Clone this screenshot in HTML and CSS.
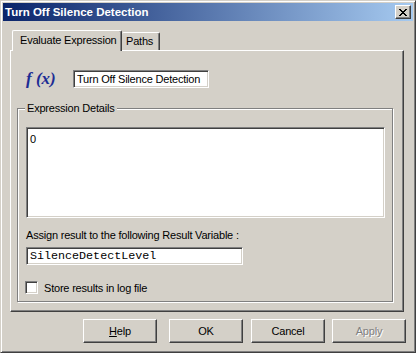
FILE: index.html
```html
<!DOCTYPE html>
<html>
<head>
<meta charset="utf-8">
<link rel="stylesheet" href="styles.css">
</head>
<body>
<div class="window">
  <div class="titlebar">
    <span class="title">Turn Off Silence Detection</span>
    <span class="close"><svg width="8" height="7" viewBox="0 0 8 7"><path d="M0 0h2v1h1v1h2V1h1V0h2v1H7v1H6v1H5v1h1v1h1v1h1v1H6V6H5V5H3v1H2v1H0V6h1V5h1V4h1V3H2V2H1V1H0z" fill="#000"/></svg></span>
  </div>
  <div class="content">
    <div class="tabs">
      <div class="tab active">Evaluate Expression</div>
      <div class="tab">Paths</div>
    </div>
    <div class="panel">
      <div class="fx-row">
        <span class="fx">f (x)</span>
        <div class="field name">Turn Off Silence Detection</div>
      </div>
      <div class="group">
        <span class="legend">Expression Details</span>
        <div class="textarea">0</div>
        <div class="label">Assign result to the following Result Variable :</div>
        <div class="field var">SilenceDetectLevel</div>
        <div class="check"><span class="box"></span><span>Store results in log file</span></div>
      </div>
    </div>
    <div class="buttons">
      <div class="btn help"><span class="u">H</span>elp</div>
      <div class="btn ok">OK</div>
      <div class="btn cancel">Cancel</div>
      <div class="btn apply disabled">Apply</div>
    </div>
  </div>
</div>
</body>
</html>
```
FILE: styles.css
```css
* { box-sizing: border-box; }
html, body { margin: 0; padding: 0; background: #d4d0c8; }
body {
  font-family: "Liberation Sans", Arial, sans-serif;
  font-size: 11px;
  letter-spacing: -0.2px;
  color: #000;
}
.window {
  width: 416px;
  height: 353px;
  border: 1px solid;
  border-color: #d4d0c8 #404040 #404040 #d4d0c8;
  box-shadow: inset 1px 1px #fff, inset -1px -1px #808080;
  padding: 2px;
  background: #d4d0c8;
  display: flex;
  flex-direction: column;
}
.titlebar {
  height: 18px;
  flex: none;
  background: linear-gradient(to right, #0a246a, #a6caf0);
  display: flex;
  align-items: center;
  justify-content: space-between;
  padding-left: 2px;
}
.title {
  color: #fff;
  font-weight: bold;
  font-size: 11.5px;
  letter-spacing: 0;
  font-family: "Liberation Sans", Arial, sans-serif;
}
.close {
  width: 16px;
  height: 14px;
  margin-right: 2px;
  background: #d4d0c8;
  border: 1px solid;
  border-color: #fff #404040 #404040 #fff;
  box-shadow: inset -1px -1px #808080;
  display: flex;
  align-items: center;
  justify-content: center;
  padding-right: 1px;
}
.close svg { display: block; }
.content {
  flex: 1;
  padding: 9px 0 0 7px;
}
.tabs {
  display: flex;
  align-items: flex-end;
  height: 20px;
  margin-left: 2px;
}
.tab {
  height: 18px;
  border-top: 1px solid #fff;
  border-left: 1px solid #fff;
  border-right: 1px solid #404040;
  box-shadow: inset -1px 0 #808080;
  border-radius: 2px 2px 0 0;
  padding: 2px 5px 0 4px;
  background: #d4d0c8;
  white-space: nowrap;
}
.tab.active {
  height: 21px;
  margin-bottom: -1px;
  position: relative;
  z-index: 1;
  width: 110px;
  padding: 3px 0 0 7px;
}
.tab:not(.active) {
  border-left: none;
  width: 38px;
}
.panel {
  width: 394px;
  height: 262px;
  border: 1px solid;
  border-color: #fff #404040 #404040 #fff;
  box-shadow: inset -1px -1px #808080;
  padding: 19px 0 0 6px;
}
.fx-row {
  display: flex;
  align-items: center;
  height: 18px;
}
.fx {
  font-family: "Liberation Serif", "Times New Roman", serif;
  font-weight: bold;
  font-style: italic;
  font-size: 17px;
  letter-spacing: 0;
  color: #1c2c94;
  margin-left: 9px;
  width: 47px;
  white-space: pre;
}
.field {
  background: #fff;
  border: 1px solid;
  border-color: #808080 #fff #fff #808080;
  box-shadow: inset 1px 1px #404040, inset -1px -1px #d4d0c8;
  padding: 2px 0 0 3px;
  white-space: nowrap;
  overflow: hidden;
}
.field.name {
  width: 136px;
  height: 18px;
}
.group {
  position: relative;
  margin-top: 20px;
  width: 376px;
  height: 194px;
  border: 1px solid #808080;
  box-shadow: inset 1px 1px #fff, 1px 1px #fff;
  padding: 18px 0 0 8px;
}
.legend {
  position: absolute;
  top: -7px;
  left: 7px;
  padding: 0 2px;
  background: #d4d0c8;
  line-height: 13px;
}
.textarea {
  width: 359px;
  height: 91px;
  background: #fff;
  border: 1px solid;
  border-color: #808080 #fff #fff #808080;
  box-shadow: inset 1px 1px #404040, inset -1px -1px #d4d0c8;
  padding: 5px 0 0 3px;
}
.label {
  margin-top: 10px;
  line-height: 14px;
}
.field.var {
  margin-top: 5px;
  width: 217px;
  height: 18px;
  font-family: "Liberation Mono", "Courier New", monospace;
  font-size: 11.7px;
  letter-spacing: 0;
  padding: 2px 0 0 3px;
  line-height: 13px;
}
.check {
  display: flex;
  align-items: center;
  margin-top: 16px;
  margin-left: -1px;
}
.box {
  width: 13px;
  height: 13px;
  background: #fff;
  border: 1px solid;
  border-color: #808080 #fff #fff #808080;
  box-shadow: inset 1px 1px #404040, inset -1px -1px #d4d0c8;
  margin-right: 6px;
}
.buttons {
  display: flex;
  margin-top: 7px;
  padding-left: 73px;
}
.btn {
  width: 74px;
  height: 24px;
  border: 1px solid;
  border-color: #fff #404040 #404040 #fff;
  box-shadow: inset -1px -1px #808080;
  display: flex;
  align-items: center;
  justify-content: center;
}
.btn.ok { margin-left: 12px; }
.btn.cancel { margin-left: 8px; }
.btn.apply { margin-left: 7px; }
.u { text-decoration: underline; }
.disabled {
  color: #808080;
  text-shadow: 1px 1px #fff;
}
```
